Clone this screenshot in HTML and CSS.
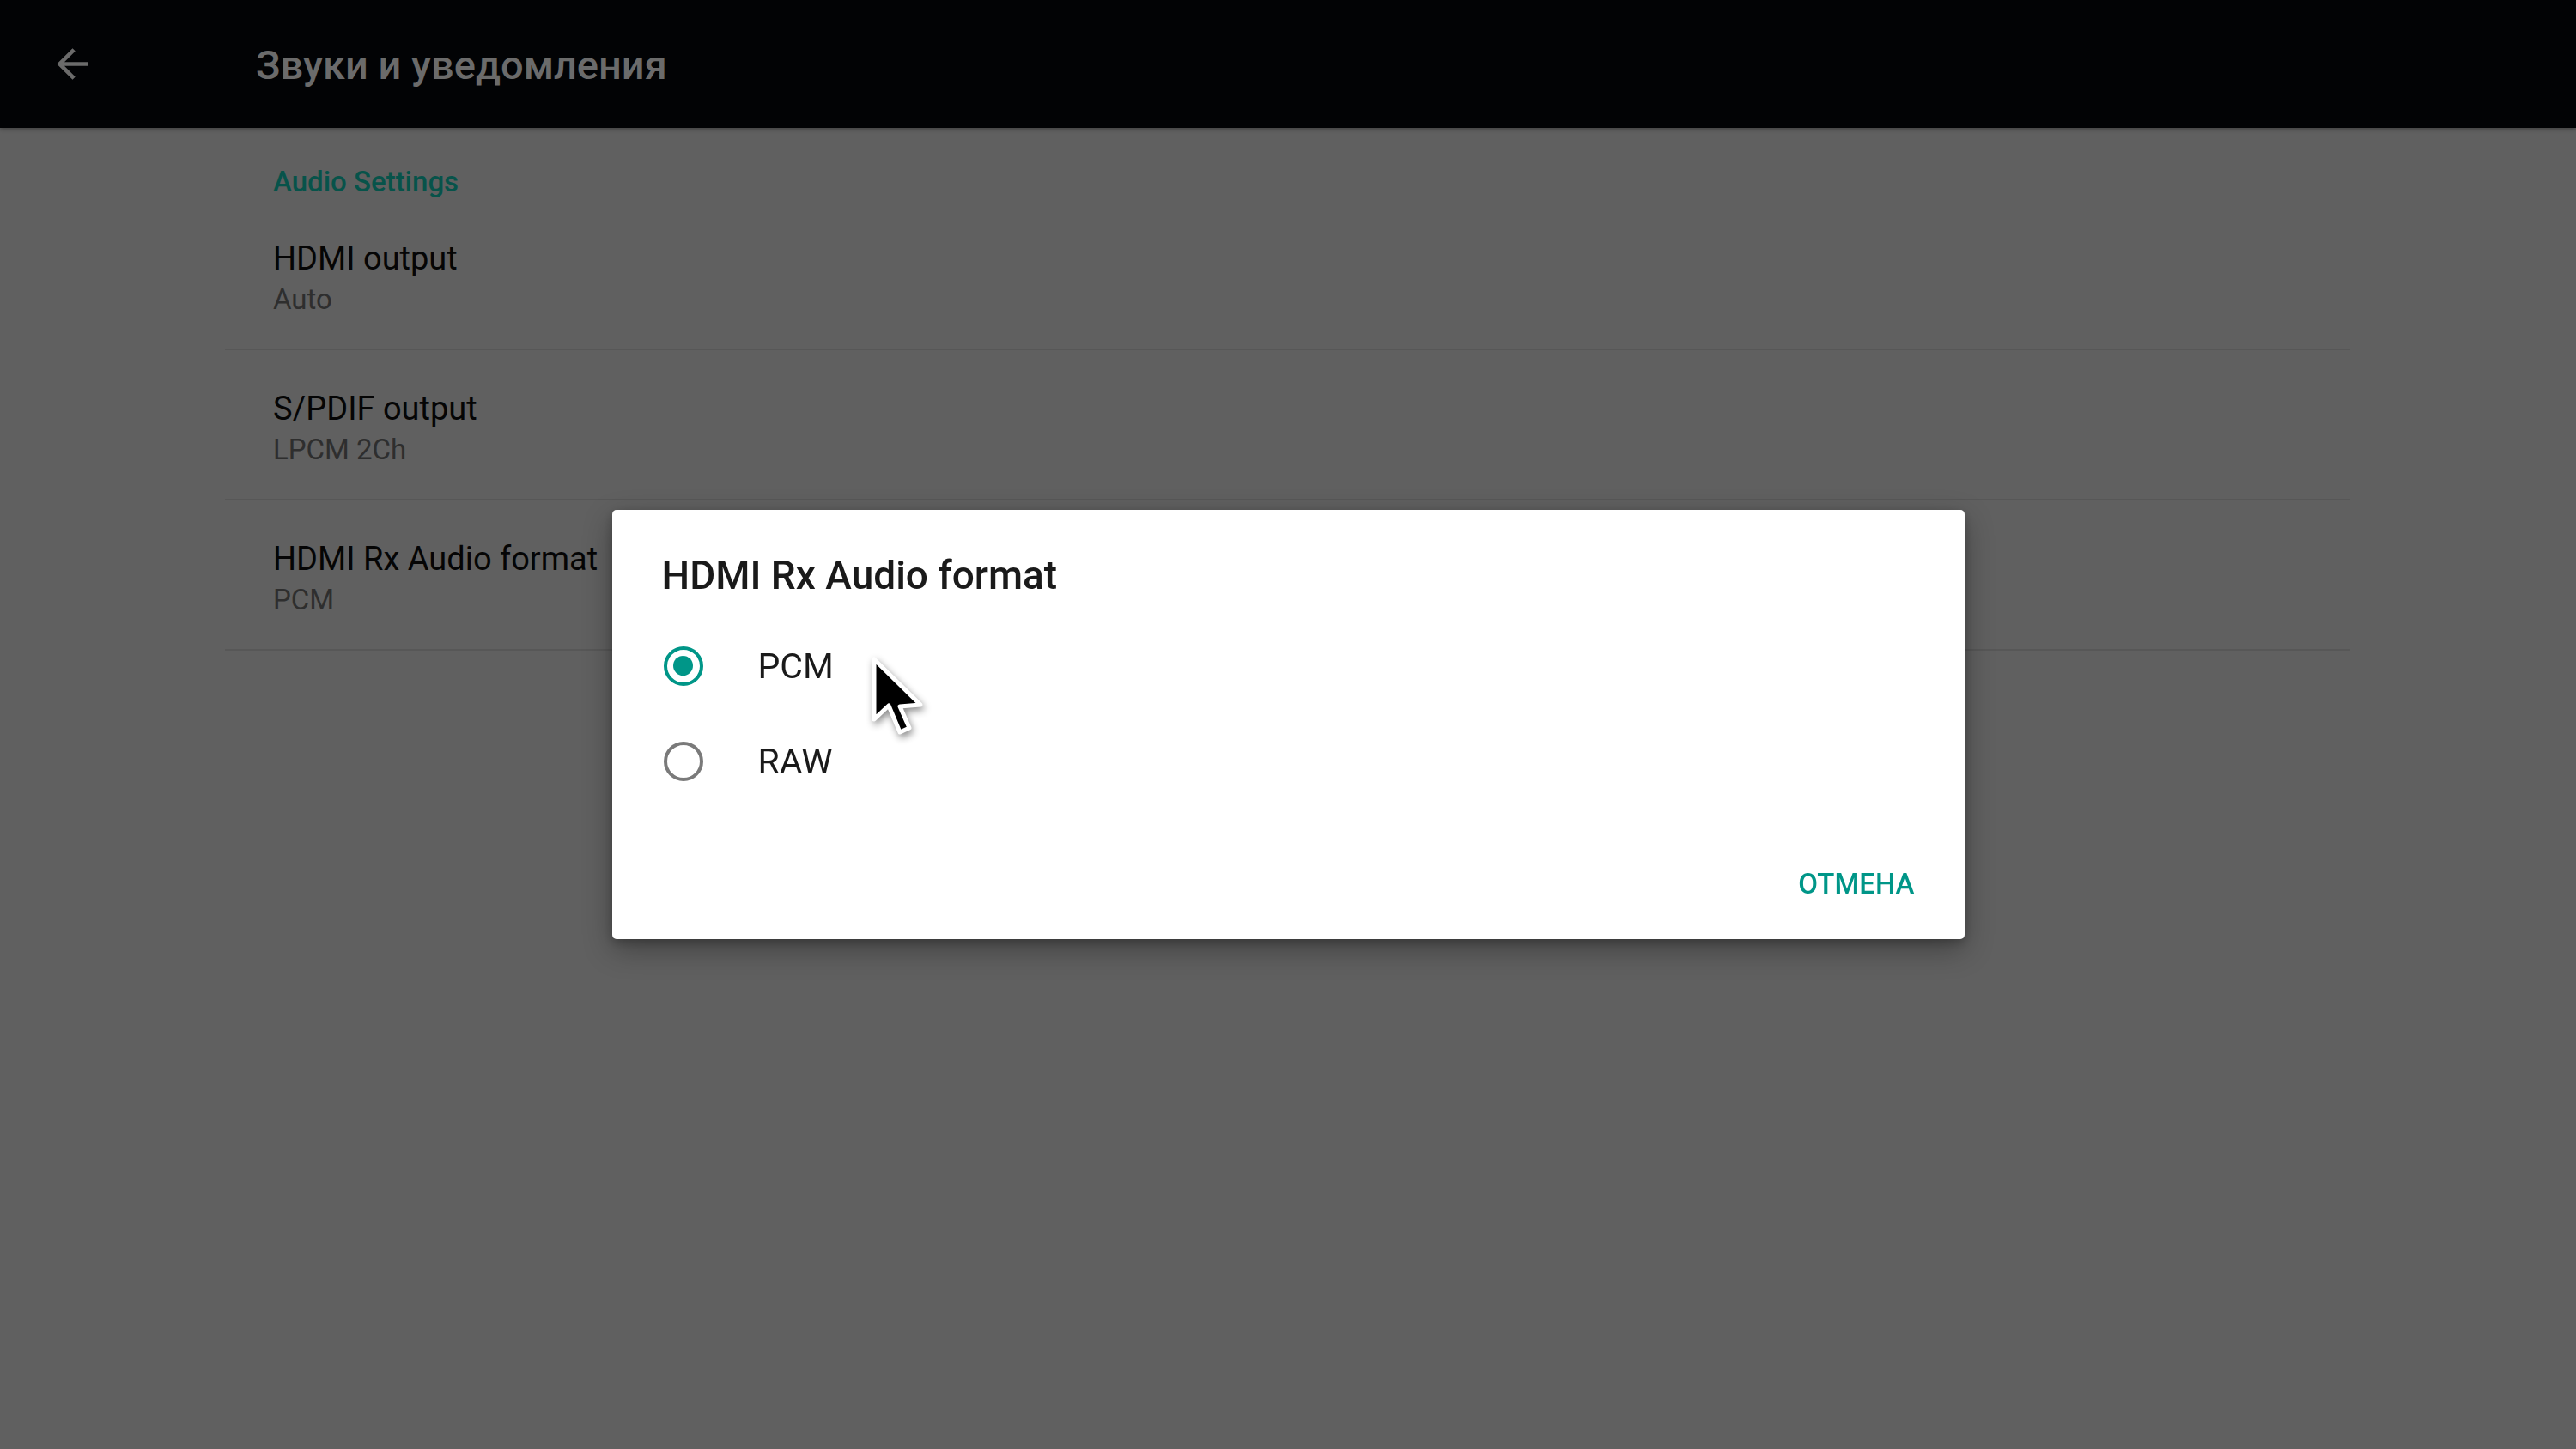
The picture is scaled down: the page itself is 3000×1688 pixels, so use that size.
FILE: index.html
```html
<!DOCTYPE html>
<html lang="ru">
<head>
    <meta charset="UTF-8">
    <meta name="viewport" content="width=device-width, initial-scale=1.0">
    <title>Звуки и уведомления</title>
    <link rel="stylesheet" href="styles.css">
</head>
<body>
    <header class="app-bar">
        <button class="back-btn" aria-label="Назад">
            <svg viewBox="0 0 24 24" width="55" height="55">
                <path d="M20 11H7.83l5.59-5.59L12 4l-8 8 8 8 1.41-1.41L7.83 13H20v-2z" fill="currentColor"/>
            </svg>
        </button>
        <h1 class="app-title">Звуки и уведомления</h1>
    </header>

    <main class="pref-list">
        <div class="pref-category">Audio Settings</div>

        <div class="pref">
            <div class="pref-title">HDMI output</div>
            <div class="pref-summary">Auto</div>
        </div>
        <div class="pref">
            <div class="pref-title">S/PDIF output</div>
            <div class="pref-summary">LPCM 2Ch</div>
        </div>
        <div class="pref">
            <div class="pref-title">HDMI Rx Audio format</div>
            <div class="pref-summary">PCM</div>
        </div>
    </main>

    <div class="scrim">
        <div class="dialog">
            <h2 class="dialog-title">HDMI Rx Audio format</h2>
            <div class="choice-list">
                <label class="choice">
                    <span class="radio checked"></span>
                    <span class="choice-label">PCM</span>
                </label>
                <label class="choice">
                    <span class="radio"></span>
                    <span class="choice-label">RAW</span>
                </label>
            </div>
            <div class="dialog-actions">
                <button class="text-btn">ОТМЕНА</button>
            </div>
        </div>
    </div>

    <svg class="pointer" viewBox="0 0 80 110" width="80" height="110">
        <polygon transform="translate(10 10)"
                 points="0,0 0,70 17,54 30,85 41,80 30,55 54,53"
                 fill="#000" stroke="#fff" stroke-width="5" stroke-linejoin="round"/>
    </svg>
</body>
</html>
```

FILE: styles.css
```css
*, *::before, *::after {
    box-sizing: border-box;
}

body {
    margin: 0;
    min-height: 100vh;
    background: #606060;
    font-family: Roboto, "Noto Sans", sans-serif;
}

/* top bar */
.app-bar {
    height: 149px;
    background: #020305;
    display: flex;
    align-items: center;
    padding: 3px 0 0 57px;
    box-shadow: 0 2px 4px rgba(0, 0, 0, 0.3);
}

.back-btn {
    width: 55px;
    height: 55px;
    padding: 0;
    border: none;
    background: none;
    color: #6b6b6b;
    display: flex;
    margin-top: -3px;
}

.app-title {
    margin: 0 0 0 186px;
    font-size: 47px;
    font-weight: 500;
    line-height: 60px;
    color: #6b6b6b;
}

/* preference list */
.pref-list {
    margin-left: 262px;
    width: 2475px;
}

.pref-category {
    height: 84px;
    padding: 43px 56px 0;
    font-size: 33px;
    font-weight: 500;
    line-height: 40px;
    color: #07534a;
}

.pref {
    padding: 46px 56px 35px;
    border-bottom: 2px solid #575757;
}

.pref-title {
    font-size: 38px;
    line-height: 44px;
    color: #050505;
}

.pref-summary {
    margin-top: 4px;
    font-size: 33px;
    line-height: 44px;
    color: #2e2e2e;
}

/* dialog */
.scrim {
    position: fixed;
    inset: 0;
    display: flex;
    align-items: center;
    justify-content: center;
}

.dialog {
    width: 1575px;
    height: 500px;
    background: #fff;
    border-radius: 5px;
    box-shadow: 0 12px 34px rgba(0, 0, 0, 0.32), 0 4px 12px rgba(0, 0, 0, 0.22);
    padding: 46px 58px 44px;
    display: flex;
    flex-direction: column;
}

.dialog-title {
    margin: 0;
    font-size: 46px;
    font-weight: 500;
    line-height: 60px;
    color: #1a1a1a;
}

.choice-list {
    margin-top: 20px;
}

.choice {
    height: 111px;
    display: flex;
    align-items: center;
    padding-left: 2px;
}

.radio {
    width: 46px;
    height: 46px;
    border-radius: 50%;
    border: 4.5px solid #7a7a7a;
    display: flex;
    align-items: center;
    justify-content: center;
}

.radio.checked {
    border-color: #009688;
}

.radio.checked::after {
    content: "";
    width: 23px;
    height: 23px;
    border-radius: 50%;
    background: #009688;
}

.choice-label {
    margin-left: 64px;
    font-size: 41px;
    line-height: 50px;
    color: #1a1a1a;
}

.dialog-actions {
    margin-top: auto;
    display: flex;
    justify-content: flex-end;
}

.text-btn {
    padding: 0;
    border: none;
    background: none;
    font-family: inherit;
    font-size: 33px;
    font-weight: 500;
    line-height: 40px;
    color: #009688;
}

/* mouse pointer on top */
.pointer {
    position: absolute;
    left: 1008px;
    top: 758px;
    filter: drop-shadow(2px 4px 4px rgba(0, 0, 0, 0.45));
}
```
